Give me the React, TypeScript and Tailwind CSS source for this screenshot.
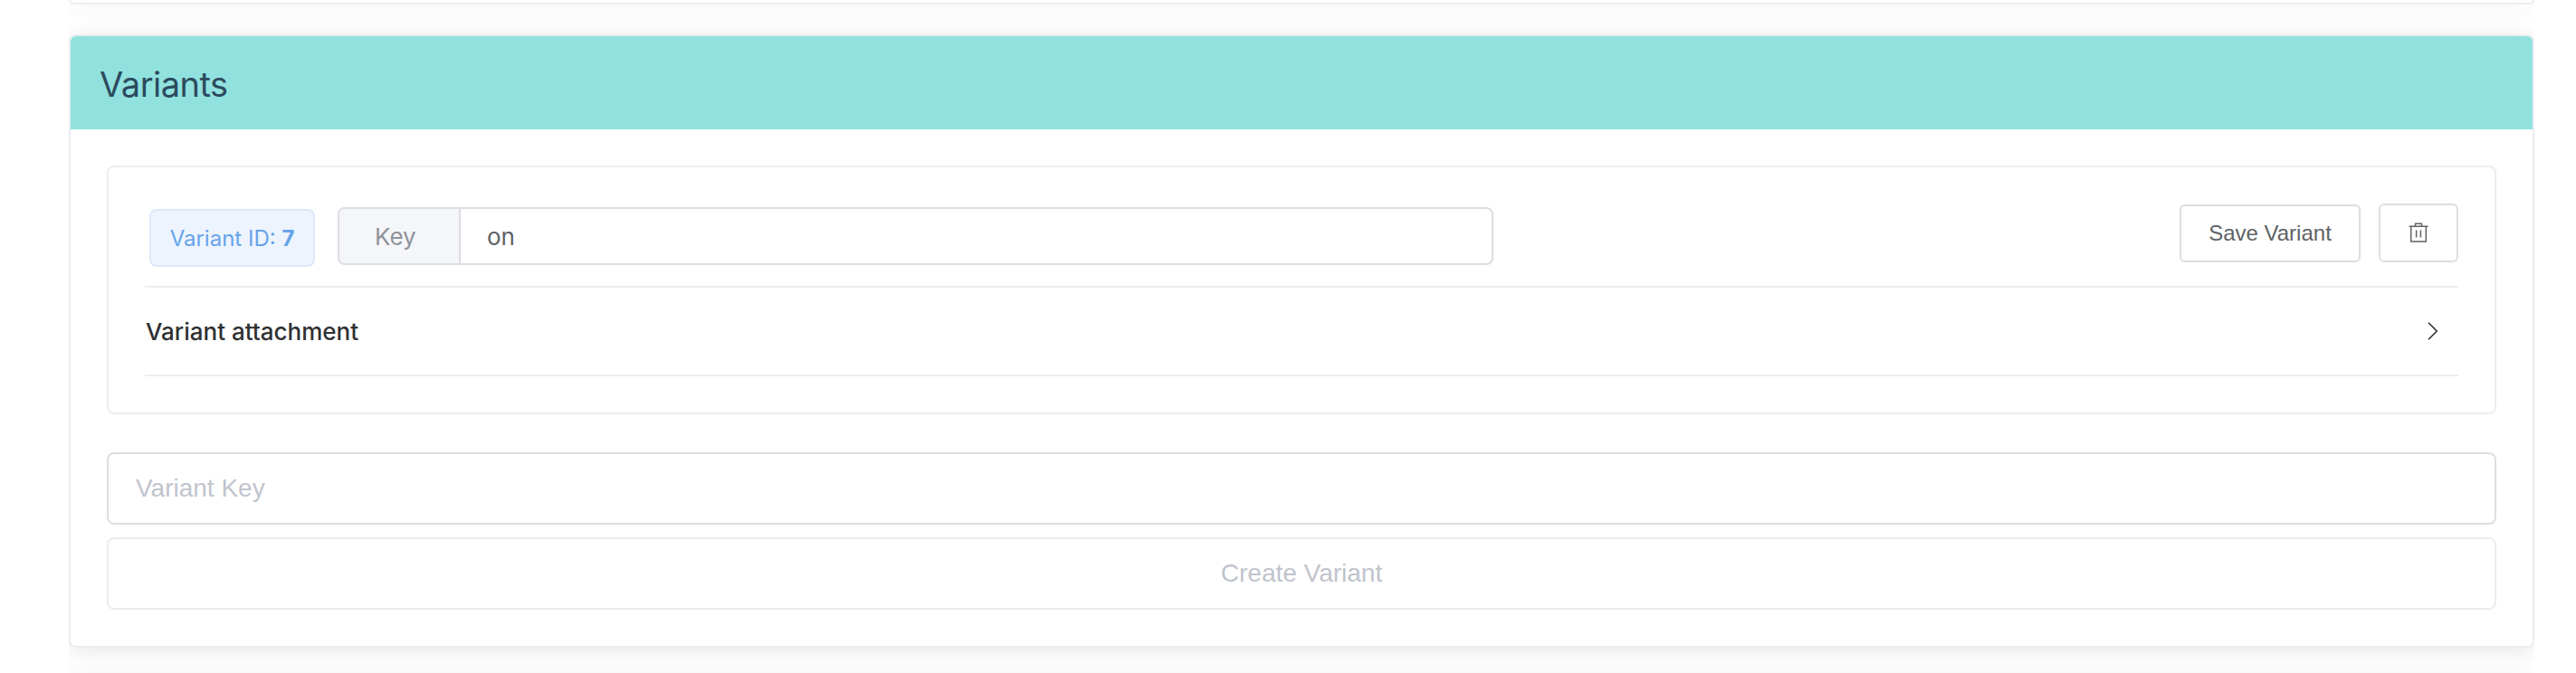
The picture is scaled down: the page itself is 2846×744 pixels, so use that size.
import React from "react";

const shadow = "shadow-[0_4px_24px_rgba(0,0,0,0.1)]";

function TrashIcon() {
  return (
    <svg className="h-[22px] w-[22px]" viewBox="0 0 22 22" fill="none" stroke="#606266" strokeWidth="1.5">
      <path d="M0.5 4.2H21.5M7.5 4.2V1.2H14.5V4.2M2.7 4.2V21H19.3V4.2M8.6 8.5V16.5M13.4 8.5V16.5" />
    </svg>
  );
}

function ChevronIcon() {
  return (
    <svg className="h-[20px] w-[12px]" viewBox="0 0 12 20" fill="none" stroke="#303133" strokeWidth="1.6">
      <path d="M1 0.8L10.2 10L1 19.2" />
    </svg>
  );
}

function VariantCard() {
  return (
    <div className="h-[275px] rounded-[8px] border-2 border-[#ebedf2] px-10 pt-10">
      <div className="flex h-[91px] items-start">
        <div className="mt-[6px] ml-[5px] flex h-16 w-[183px] items-center justify-center rounded-[8px] border-2 border-[#dce9f7] bg-[#edf4fe] pt-[2px] text-[24px] whitespace-nowrap text-[#66a3ea]">
          <span>
            Variant ID: <b className="font-bold">7</b>
          </span>
        </div>
        <div className="mt-1 ml-[25px] flex h-16 w-[1277px] overflow-hidden rounded-[8px] border-2 border-[#dcdee3] text-[26px]">
          <div className="flex w-[134px] items-center border-r-2 border-[#dcdee3] bg-[#f5f6fa] pl-[39px] text-[#909399]">Key</div>
          <div className="flex items-center pl-[29px] text-[#606266]">on</div>
        </div>
        <div className="ml-auto flex font-['Liberation_Sans',sans-serif]">
          <button className="mt-[1px] h-16 w-[200px] rounded-[6px] border-2 border-[#dcdee3] text-[24px] whitespace-nowrap text-[#606266]">
            Save Variant
          </button>
          <button className="ml-5 flex h-[65px] w-[88px] items-center justify-center rounded-[6px] border-2 border-[#dcdee3] pb-[2px]">
            <TrashIcon />
          </button>
        </div>
      </div>
      <div className="flex h-[100px] items-center justify-between border-y-2 border-[#ebedf2] pr-[22px] pl-px text-[26px] font-medium text-[#303133]">
        <span className="pt-px">Variant attachment</span>
        <ChevronIcon />
      </div>
    </div>
  );
}

export default function App() {
  return (
    <div className="h-[744px] overflow-hidden bg-white font-[Inter,sans-serif]">
      <div className="ml-[76px] flex h-[744px] w-[2724px] flex-col overflow-hidden">
        <div className={`h-[5px] shrink-0 rounded-b-[8px] border-2 border-t-0 border-[#ebedf2] bg-white ${shadow}`} />
        <div className={`mt-[33px] h-[678px] shrink-0 overflow-hidden rounded-[8px] border-2 border-[#ebedf2] bg-white ${shadow}`}>
          <div className="flex h-[103px] items-center bg-[#91e2de] pt-[3px] pl-8 text-[38px] tracking-[-0.5px] text-[#2c4a5e]">
            <h2>Variants</h2>
          </div>
          <div className="px-10 pt-10">
            <VariantCard />
            <input
              placeholder="Variant Key"
              className="mt-[42px] block h-20 w-full rounded-[8px] border-2 border-[#dcdee3] px-[30px] font-['Liberation_Sans',sans-serif] text-[28px] placeholder:text-[#c0c4cc]"
            />
            <button className="mt-[14px] block h-20 w-full rounded-[8px] border-2 border-[#ebedf2] font-['Liberation_Sans',sans-serif] text-[28px] text-[#c0c4cc]">
              Create Variant
            </button>
          </div>
        </div>
        <div className={`mt-8 h-20 shrink-0 rounded-[8px] bg-white ${shadow}`} />
      </div>
    </div>
  );
}
